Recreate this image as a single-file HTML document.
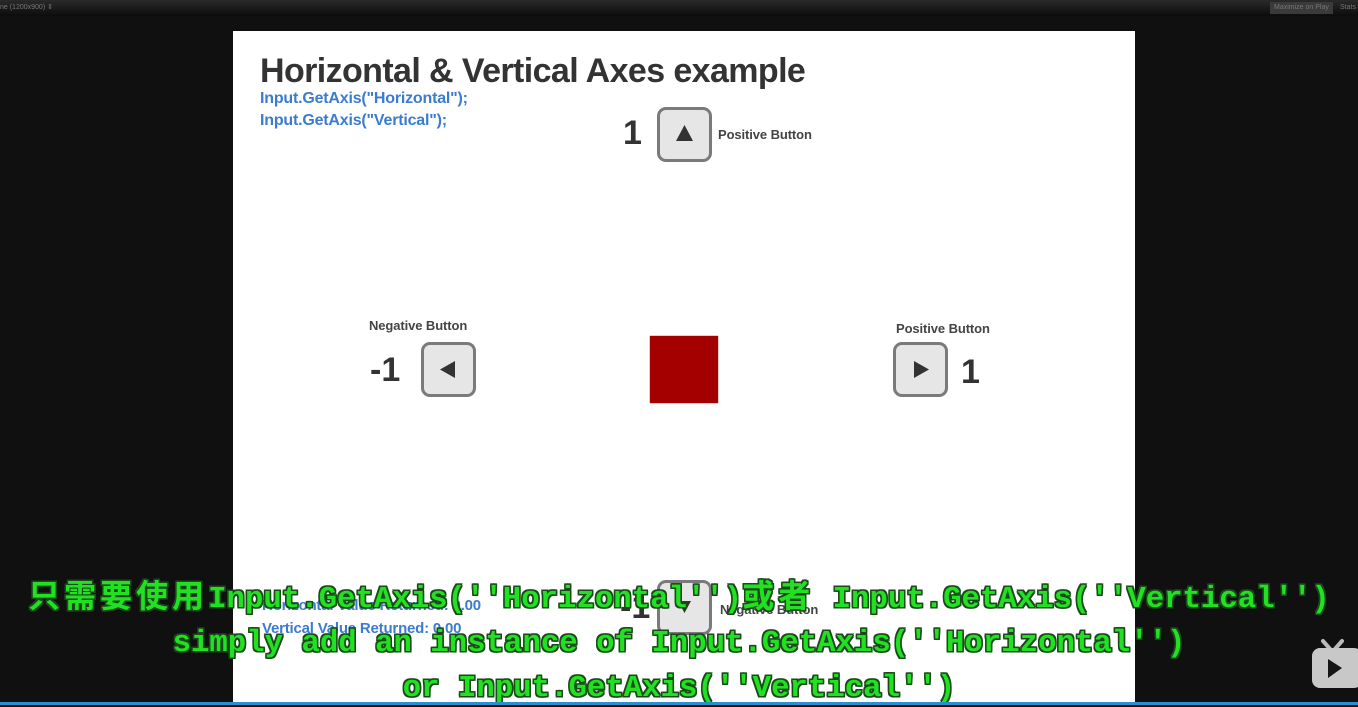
<!DOCTYPE html>
<html><head><meta charset="utf-8"><style>
body{margin:0;width:1358px;height:705px;background:#101010;position:relative;overflow:hidden;font-family:"Liberation Sans",sans-serif}
.top{position:absolute;left:0;top:0;width:1358px;height:16px;background:linear-gradient(#2a2a2a,#0c0c0c);color:#777;font-size:7px;line-height:16px}
.panel{position:absolute;left:233px;top:31px;width:902px;height:674px;background:#fff}
.a{position:absolute;white-space:nowrap}
.btn{position:absolute;width:49px;height:49px;border:3px solid #7a7a7a;border-radius:9px;background:#e6e6e6;box-sizing:content-box}
.lab{font-size:13px;font-weight:bold;color:#444;letter-spacing:-0.1px}
.num{font-size:34px;font-weight:bold;color:#333}
.blue{color:#3b7bd0;font-size:16px;font-weight:bold;letter-spacing:-0.2px}
.sub{position:absolute;left:0;width:1358px;text-align:center;font-family:"Liberation Mono","Noto Sans CJK SC",monospace;font-weight:bold;font-size:30.7px;line-height:36px;color:#22e022;white-space:nowrap;text-shadow:-1.5px 0 #1a4a1a,1.5px 0 #1a4a1a,0 -1.5px #1a4a1a,0 1.5px #1a4a1a,1.5px 1.5px #1a4a1a,-1.5px -1.5px #1a4a1a,1.5px -1.5px #1a4a1a,-1.5px 1.5px #1a4a1a}
.cj{letter-spacing:4px;font-size:32px}
</style></head><body>
<div class="top"><span>ne (1200x900) ⇕</span><span style="position:absolute;left:1270px;top:2px;height:12px;line-height:12px;background:#3a3a3a;padding:0 4px">Maximize on Play</span><span style="position:absolute;left:1340px">Stats</span></div>
<div class="panel"></div>
<div class="a" style="left:260px;top:52px;font-size:34px;font-weight:bold;color:#333;letter-spacing:-0.6px">Horizontal &amp; Vertical Axes example</div>
<div class="a blue" style="left:260px;top:90px">Input.GetAxis("Horizontal");</div>
<div class="a blue" style="left:260px;top:112px">Input.GetAxis("Vertical");</div>
<div class="a num" style="left:623px;top:114px">1</div>
<div class="btn" style="left:657px;top:107px"><svg width="49" height="49"><polygon points="16,31 33,31 24.5,15" fill="#333"/></svg></div>
<div class="a lab" style="left:718px;top:127px">Positive Button</div>
<div class="a lab" style="left:369px;top:318px">Negative Button</div>
<div class="a num" style="left:370px;top:351px">-1</div>
<div class="btn" style="left:421px;top:342px"><svg width="49" height="49"><polygon points="16,24.5 31,16 31,33" fill="#333"/></svg></div>
<div style="position:absolute;left:650px;top:336px;width:68px;height:67px;background:#a50000;box-shadow:0 0 1px #600"></div>
<div class="a lab" style="left:896px;top:321px">Positive Button</div>
<div class="btn" style="left:893px;top:342px"><svg width="49" height="49"><polygon points="18,16 33,24.5 18,33" fill="#333"/></svg></div>
<div class="a num" style="left:961px;top:353px">1</div>
<div class="btn" style="left:657px;top:580px"><svg width="49" height="49"><polygon points="18,18 31,18 24.5,30" fill="#333"/></svg></div>
<div class="a num" style="left:620px;top:588px">-1</div>
<div class="a lab" style="left:720px;top:602px">Negative Button</div>
<div class="a blue" style="left:262px;top:597px;font-size:15px">Horizontal Value Returned: 0.00</div>
<div class="a blue" style="left:262px;top:620px;font-size:15px">Vertical Value Returned: 0.00</div>
<div class="sub" style="top:581px"><span class="cj">只需要使用</span>Input.GetAxis(''Horizontal'')<span class="cj">或者</span> Input.GetAxis(''Vertical'')</div>
<div class="sub" style="top:626px">simply add an instance of Input.GetAxis(''Horizontal'')</div>
<div class="sub" style="top:671px">or Input.GetAxis(''Vertical'')</div>
<svg style="position:absolute;left:1310px;top:633px" width="48" height="56"><path d="M13 8 L20 16 M32 8 L25 16" stroke="#bbb" stroke-width="4" stroke-linecap="round"/><rect x="2" y="15" width="50" height="40" rx="8" fill="#c8c8c8"/><polygon points="18,26 18,45 32,35" fill="#151515"/></svg>
<div style="position:absolute;left:0;top:702px;width:1358px;height:3px;background:#2a8fd0"></div>
</body></html>
